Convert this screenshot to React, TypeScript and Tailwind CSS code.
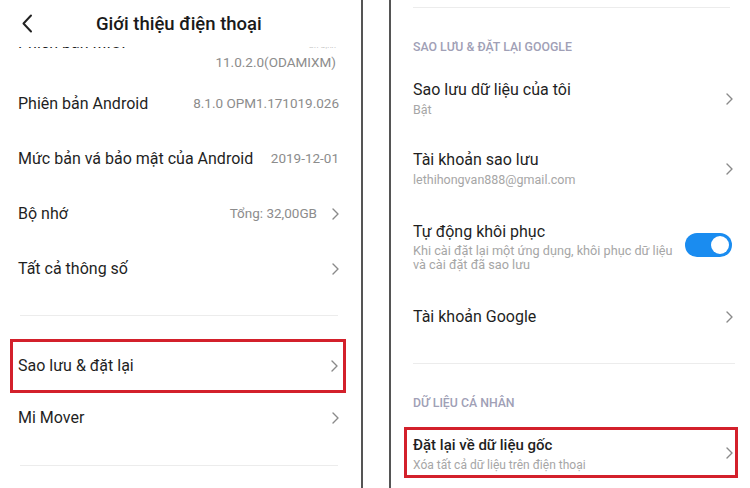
import type { ReactNode } from "react";

function Chevron({ className = "" }: { className?: string }) {
  return (
    <svg
      width="7"
      height="12"
      viewBox="0 0 7 12"
      fill="none"
      className={className}
    >
      <path
        d="M1 1l5 5-5 5"
        stroke="#8a8a8a"
        strokeWidth="1.4"
        strokeLinecap="round"
        strokeLinejoin="round"
      />
    </svg>
  );
}

function Divider({ className = "" }: { className?: string }) {
  return <div className={`h-px bg-[#ececec] ${className}`} />;
}

type InfoRowProps = {
  label: string;
  value?: string;
  arrow?: boolean;
};

function InfoRow({ label, value, arrow }: InfoRowProps) {
  return (
    <div className="flex h-[55px] items-center justify-between pl-[18px] pr-[22px]">
      <span className="text-[16px] text-[#1f1f1f]">{label}</span>
      <div className="flex items-center gap-[15px]">
        {value && (
          <span className="text-[13.5px] text-[#8c8c8c]">{value}</span>
        )}
        {arrow && <Chevron />}
      </div>
    </div>
  );
}

function AboutPhone() {
  return (
    <div className="flex h-full w-[361px] shrink-0 flex-col bg-white">
      <header className="relative z-10 flex h-[47px] items-center bg-white">
        <svg
          width="12"
          height="19"
          viewBox="0 0 12 19"
          fill="none"
          className="ml-[21px]"
        >
          <path
            d="M10 1.5L2.5 9.5l7.5 8"
            stroke="#222"
            strokeWidth="2"
            strokeLinecap="round"
            strokeLinejoin="round"
          />
        </svg>
        <h1 className="ml-[63px] mt-[2px] text-[18.5px] font-medium text-[#1a1a1a]">
          Giới thiệu điện thoại
        </h1>
      </header>

      {/* MIUI version row, scrolled mostly under the header */}
      <div className="flex h-[29px] justify-between overflow-hidden pl-[18px] pr-[25px]">
        <span className="-mt-[16px] text-[16px] text-[#1f1f1f]">
          Phiên bản MIUI
        </span>
        <div className="flex flex-col items-end">
          <span className="-mt-[6px] text-[8px] leading-[10px] text-[#c4c4c4]">
            Ổn định
          </span>
          <span className="mt-[2px] text-[13.5px] leading-[18px] text-[#8c8c8c]">
            11.0.2.0(ODAMIXM)
          </span>
        </div>
      </div>

      <InfoRow label="Phiên bản Android" value="8.1.0 OPM1.171019.026" />
      <InfoRow label="Mức bản vá bảo mật của Android" value="2019-12-01" />
      <InfoRow label="Bộ nhớ" value="Tổng: 32,00GB" arrow />
      <InfoRow label="Tất cả thông số" arrow />

      <Divider className="ml-[20px] mr-[23px] mt-[19px]" />

      <div className="ml-[10px] mr-[15px] mt-[23px] flex h-[54px] items-center justify-between border-[3px] border-[#d3202b] pl-[5px] pr-[5px]">
        <span className="text-[16px] text-[#1f1f1f]">Sao lưu &amp; đặt lại</span>
        <Chevron />
      </div>

      <div className="flex h-[50px] items-center justify-between pl-[18px] pr-[22px]">
        <span className="text-[16px] text-[#1f1f1f]">Mi Mover</span>
        <Chevron />
      </div>

      <Divider className="ml-[20px] mr-[23px] mt-[22px]" />
    </div>
  );
}

function SectionTitle({ children }: { children: ReactNode }) {
  return (
    <div className="pl-[22px] pt-[31px] text-[12.3px] font-medium uppercase leading-[16px] text-[#a0a0b6]">
      {children}
    </div>
  );
}

type SettingRowProps = {
  title: string;
  subtitle?: string;
  height: string;
};

function SettingRow({ title, subtitle, height }: SettingRowProps) {
  return (
    <div
      className={`flex ${height} items-center justify-between pl-[22px] pr-[17px]`}
    >
      <div className="flex flex-col">
        <span className="text-[16px] leading-[20px] text-[#1f1f1f]">
          {title}
        </span>
        {subtitle && (
          <span className="mt-[2px] text-[12.5px] leading-[16px] text-[#a6a6a6]">
            {subtitle}
          </span>
        )}
      </div>
      <Chevron />
    </div>
  );
}

function Toggle() {
  return (
    <div className="flex h-[24px] w-[47px] shrink-0 items-center justify-end rounded-full bg-[#1a8cf0] pr-[3px]">
      <div className="h-[18px] w-[18px] rounded-full bg-white" />
    </div>
  );
}

function BackupReset() {
  return (
    <div className="flex h-full flex-1 flex-col bg-white">
      <Divider className="ml-[22px] mr-[20px] mt-[7px]" />

      <div className="h-[56px]">
        <SectionTitle>Sao lưu &amp; đặt lại Google</SectionTitle>
      </div>

      <SettingRow title="Sao lưu dữ liệu của tôi" subtitle="Bật" height="h-[70px]" />
      <SettingRow
        title="Tài khoản sao lưu"
        subtitle="lethihongvan888@gmail.com"
        height="h-[70px]"
      />

      <div className="flex h-[86px] items-center justify-between pl-[22px] pr-[18px]">
        <div className="flex flex-col">
          <span className="text-[16px] leading-[20px] text-[#1f1f1f]">
            Tự động khôi phục
          </span>
          <span className="mt-[2px] whitespace-nowrap text-[12.7px] leading-[14px] text-[#a6a6a6]">
            Khi cài đặt lại một ứng dụng, khôi phục dữ liệu
            <br />
            và cài đặt đã sao lưu
          </span>
        </div>
        <div className="-mt-[4px]">
          <Toggle />
        </div>
      </div>

      <SettingRow title="Tài khoản Google" height="h-[54px]" />

      <Divider className="ml-[22px] mr-[15px] mt-[19px]" />

      <div className="h-[63px]">
        <SectionTitle>Dữ liệu cá nhân</SectionTitle>
      </div>

      <div className="ml-[13px] mr-[12px] flex h-[51px] items-center justify-between border-[3px] border-[#d3202b] pl-[6px] pr-[2px]">
        <div className="flex flex-col self-start pt-[5px]">
          <span className="text-[15px] font-medium leading-[20px] text-[#1f1f1f]">
            Đặt lại về dữ liệu gốc
          </span>
          <span className="mt-[3px] text-[12px] leading-[14px] text-[#a6a6a6]">
            Xóa tất cả dữ liệu trên điện thoại
          </span>
        </div>
        <Chevron />
      </div>
    </div>
  );
}

export default function App() {
  return (
    <div className="flex h-[488px] w-[750px] overflow-hidden bg-white font-['Roboto',sans-serif]">
      <AboutPhone />
      <div className="w-[2px] shrink-0 bg-[#555]" />
      <div className="w-[26px] shrink-0 bg-white" />
      <div className="w-[2px] shrink-0 bg-[#555]" />
      <BackupReset />
    </div>
  );
}
